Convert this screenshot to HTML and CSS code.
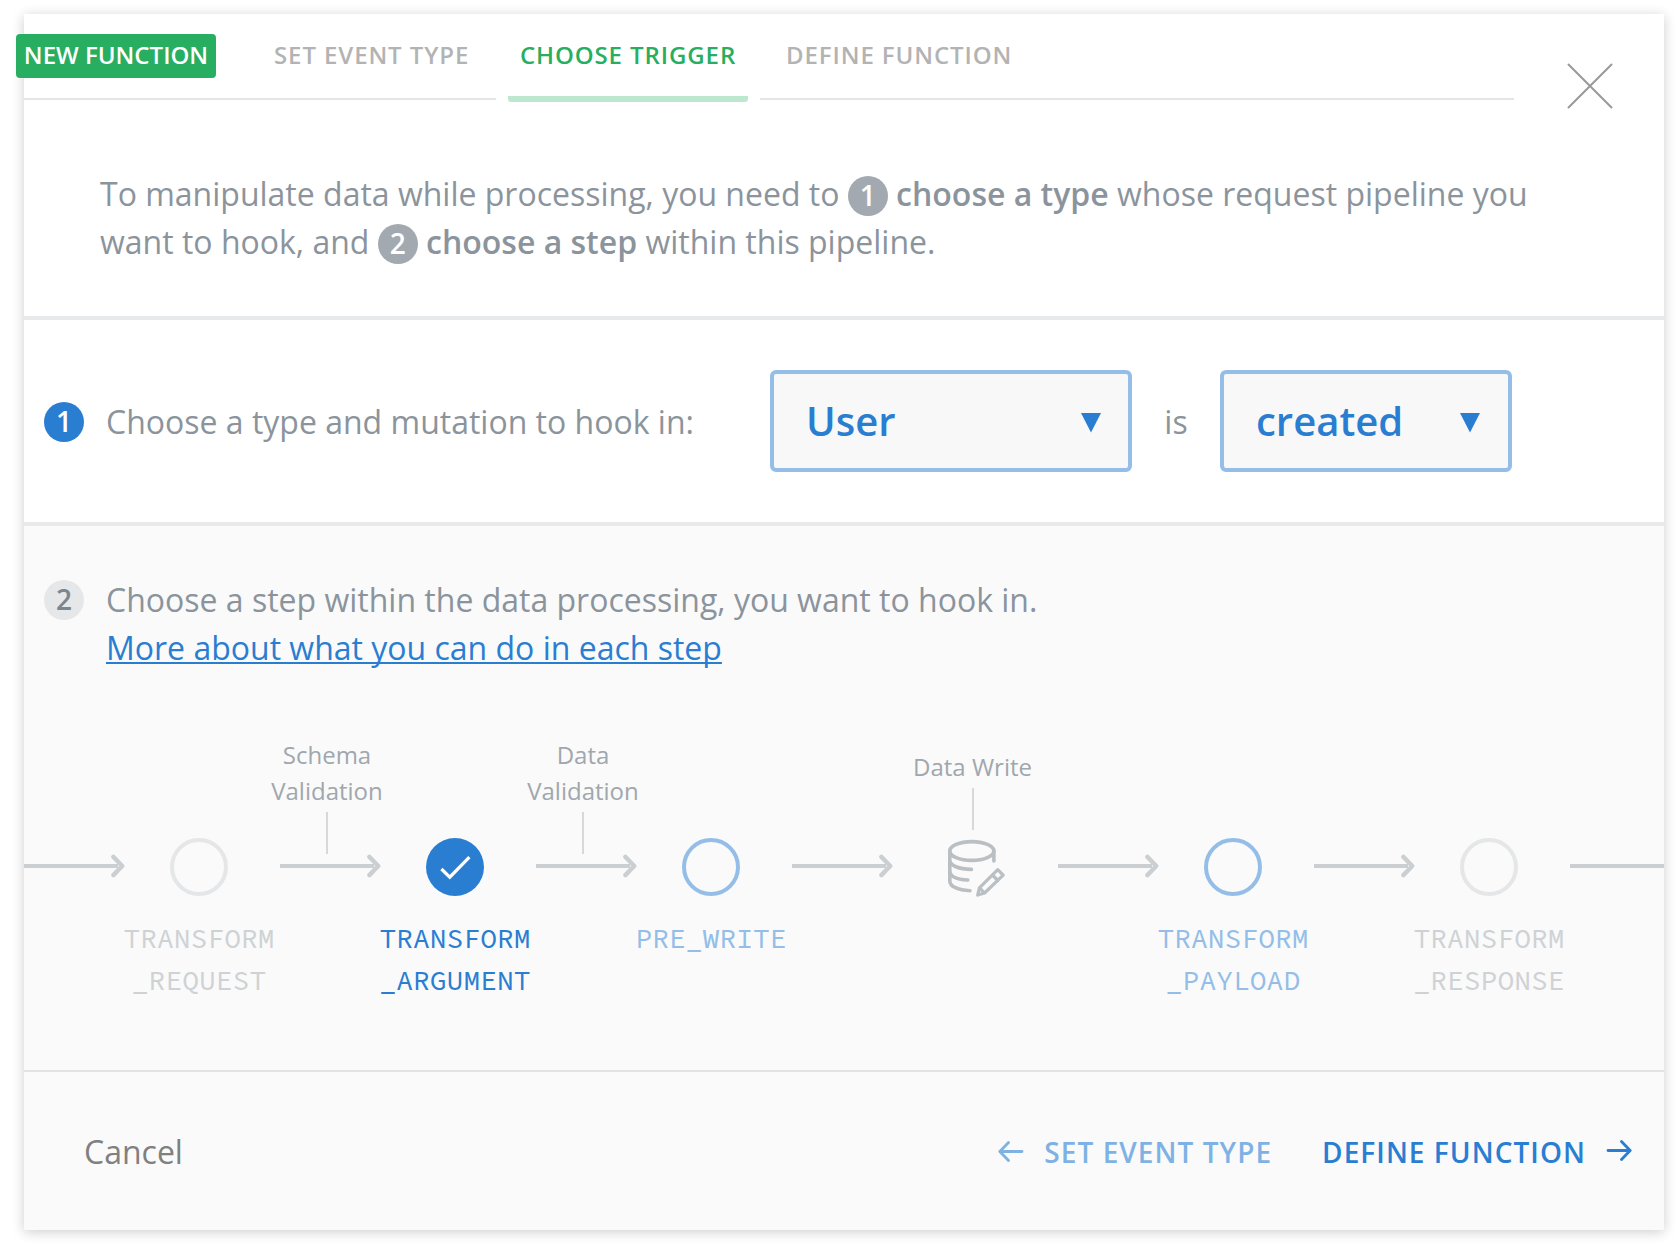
FILE: index.html
```
<!DOCTYPE html>
<html lang="en">
<head>
<meta charset="utf-8">
<title>New Function</title>
<link rel="stylesheet" href="styles.css">
</head>
<body>
<svg class="defs" width="0" height="0" aria-hidden="true">
  <symbol id="flow-arrow" viewBox="0 0 101 24">
    <path d="M0 12H94" fill="none" stroke="#cbcfd1" stroke-width="4"/>
    <path d="M89.4 2.9L98.2 12L89.4 21.1" fill="none" stroke="#cbcfd1" stroke-width="4.4" stroke-linejoin="round" stroke-linecap="round"/>
  </symbol>
  <symbol id="caret" viewBox="0 0 20 20">
    <path d="M0 0H20L10 19.5Z" fill="#2a7ed2"/>
  </symbol>
</svg>

<main class="popup">
  <header class="header">
    <div class="segment segment-first">
      <span class="badge">NEW FUNCTION</span>
      <span class="tab">SET EVENT TYPE</span>
    </div>
    <div class="segment segment-active"><span class="tab">CHOOSE TRIGGER</span></div>
    <div class="segment segment-last"><span class="tab">DEFINE FUNCTION</span></div>
    <svg class="close" width="46" height="46" viewBox="0 0 46 46"><path d="M1.5 1.5L44.5 44.5M44.5 1.5L1.5 44.5" fill="none" stroke="#999" stroke-width="2" stroke-linecap="round"/></svg>
  </header>

  <p class="intro">To manipulate data while processing, you need to <span class="num num-gray">1</span> <b>choose a type</b> whose request pipeline you<br>want to hook, and <span class="num num-gray">2</span> <b>choose a step</b> within this pipeline.</p>

  <section class="trigger">
    <span class="num num-blue">1</span>
    <span class="trigger-text">Choose a type and mutation to hook in:</span>
    <div class="select select-type"><span>User</span><svg class="caret" width="20" height="20"><use href="#caret"/></svg></div>
    <span class="is">is</span>
    <div class="select select-mutation"><span>created</span><svg class="caret" width="20" height="20"><use href="#caret"/></svg></div>
  </section>

  <section class="steps">
    <div class="steps-head">
      <span class="num num-pale">2</span>
      <div class="steps-text">Choose a step within the data processing, you want to hook in.<br><a class="more" href="#">More about what you can do in each step</a></div>
    </div>

    <div class="pipeline">
      <div class="note note-arrow c3">Schema<br>Validation<i class="stem"></i></div>
      <div class="note note-arrow c5">Data<br>Validation<i class="stem"></i></div>
      <div class="note c8">Data Write<i class="stem"></i></div>

      <svg class="arrow" width="101" height="24"><use href="#flow-arrow"/></svg>
      <span class="node node-off"></span>
      <svg class="arrow" width="101" height="24"><use href="#flow-arrow"/></svg>
      <span class="node node-on"><svg width="58" height="58" viewBox="0 0 58 58"><path d="M15.4 31L23.8 39.2L43.4 19.2" fill="none" stroke="#fff" stroke-width="3.2"/></svg></span>
      <svg class="arrow" width="101" height="24"><use href="#flow-arrow"/></svg>
      <span class="node"></span>
      <svg class="arrow" width="101" height="24"><use href="#flow-arrow"/></svg>
      <svg class="db" width="58" height="60" viewBox="0 0 58 60" fill="none" stroke="#b9bfc3" stroke-width="3.6" stroke-linecap="round" stroke-linejoin="round">
        <ellipse cx="23.8" cy="13" rx="22.1" ry="9.4"/>
        <path d="M45.9 13V23M1.8 13V43C1.8 48.5 10 52.2 22 52.7M1.8 22C1.8 27.5 11 31.4 23.5 31.4M1.8 32.5C1.8 38.5 9 41.6 19.8 42"/>
        <path stroke-width="3.2" d="M49.7 31.7L55.2 37.1L36.6 55L29.7 57L31.4 49.8ZM44.4 37L49.9 42.5M31.8 50.2L36.2 54.6"/>
      </svg>
      <svg class="arrow" width="101" height="24"><use href="#flow-arrow"/></svg>
      <span class="node"></span>
      <svg class="arrow" width="101" height="24"><use href="#flow-arrow"/></svg>
      <span class="node node-off"></span>
      <span class="tail"></span>

      <div class="label label-off c2">TRANSFORM<br>_REQUEST</div>
      <div class="label label-on c4">TRANSFORM<br>_ARGUMENT</div>
      <div class="label c6">PRE_WRITE</div>
      <div class="label c10">TRANSFORM<br>_PAYLOAD</div>
      <div class="label label-off c12">TRANSFORM<br>_RESPONSE</div>
    </div>
  </section>

  <footer class="footer">
    <span class="cancel">Cancel</span>
    <span class="action action-back"><svg width="26" height="22" viewBox="0 0 26 22"><path d="M24 11.5H2M10.5 2.5L1.8 11.5L10.5 20.5" fill="none" stroke="currentColor" stroke-width="2.8" stroke-linecap="round" stroke-linejoin="round"/></svg><span class="action-text">SET EVENT TYPE</span></span>
    <span class="action action-next"><span class="action-text">DEFINE FUNCTION</span><svg width="26" height="22" viewBox="0 0 26 22"><path d="M2 10.5H24M15.5 1.5L24.2 10.5L15.5 19.5" fill="none" stroke="currentColor" stroke-width="2.8" stroke-linecap="round" stroke-linejoin="round"/></svg></span>
  </footer>
</main>
</body>
</html>
```
FILE: styles.css
```
* { box-sizing: border-box; }

body {
  margin: 0;
  padding: 14px 16px 20px 24px;
  background: #fff;
  font-family: "Open Sans", sans-serif;
  font-size: 32px;
  line-height: 48px;
  color: #8b949c;
}

b { font-weight: 600; }
svg { display: block; flex: none; }
.defs { display: none; }

.popup {
  width: 1640px;
  height: 1216px;
  background: #fff;
  box-shadow: 0 2px 12px rgba(0, 0, 0, .2);
}

/* Tabs */
.header { display: flex; height: 88px; }
.segment {
  display: flex;
  align-items: flex-start;
  height: 86px;
  padding-top: 20px;
  border-bottom: 2px solid #e5e5e5;
  font-size: 24px;
  line-height: 42px;
  font-weight: 600;
  color: #b3b3b3;
}
.segment-first { width: 472px; }
.segment-active {
  width: 240px;
  height: 88px;
  margin: 0 12px;
  justify-content: center;
  border: 0;
  color: #27ae60;
  background: linear-gradient(#bee7cf, #bee7cf) no-repeat 0 82px;
  border-radius: 0 0 3px 3px;
}
.segment-last { width: 754px; padding-left: 26px; }
.tab { letter-spacing: .9px; white-space: nowrap; }
.badge {
  width: 200px;
  height: 44px;
  margin: 0 58px 0 -8px;
  text-align: center;
  white-space: nowrap;
  color: #fff;
  background: #27ae60;
  border-radius: 4px;
}
.close { margin: 49px 0 0 53px; }

/* Numbered markers */
.num {
  display: inline-block;
  flex: none;
  width: 40px;
  height: 40px;
  border-radius: 50%;
  font-size: 28px;
  line-height: 38px;
  font-weight: 600;
  text-align: center;
}
.num-gray { color: #fff; background: #a2a9b0; }
.num-blue { color: #fff; background: #2a7ed2; margin: 2px 22px 0 20px; }
.num-pale { color: #7b868f; background: #e5e7e9; margin: 4px 22px 0 20px; }

.intro {
  height: 218px;
  margin: 0;
  padding: 68px 0 0 76px;
  border-bottom: 4px solid #e7e9eb;
  white-space: nowrap;
}

/* Type and mutation */
.trigger {
  display: flex;
  align-items: center;
  height: 206px;
  border-bottom: 4px solid #e7e9eb;
}
.trigger-text { width: 664px; padding-top: 2px; }
.select {
  display: flex;
  align-items: center;
  justify-content: space-between;
  height: 102px;
  padding: 0 27px 0 32px;
  border: 4px solid #94bee8;
  border-radius: 6px;
  background: #f8f8f8;
  font-size: 40px;
  font-weight: 600;
  color: #2a7ed2;
}
.select-type { width: 362px; }
.select-mutation { width: 292px; padding-right: 28px; }
.caret { margin-top: 4px; }
.is { width: 88px; padding-top: 2px; text-align: center; }

/* Pipeline steps */
.steps {
  height: 544px;
  padding-top: 50px;
  background: #fafafa;
}
.steps-head { display: flex; align-items: flex-start; }
.more { color: #2a7ed2; text-decoration: underline; text-decoration-thickness: 2px; text-decoration-skip-ink: none; text-underline-offset: 2px; }

.pipeline {
  display: grid;
  grid-template-columns: 100px 156px 100px 156px 100px 156px 100px 166px 100px 156px 100px 156px 94px;
  grid-template-rows: 101px 58px 84px;
  margin-top: 65px;
}
.note {
  grid-row: 1;
  align-self: end;
  justify-self: center;
  margin: 0 5px 8px 0;
  font-size: 24px;
  line-height: 36px;
  text-align: center;
  white-space: nowrap;
  color: #a0a7ad;
}
.note-arrow { margin: 0 -6px -16px -12px; width: 112px; }
.stem { display: block; width: 2px; height: 42px; margin: 3px auto 0; background: #d6d9db; }
.arrow { grid-row: 2; margin-top: 16px; }
.node {
  grid-row: 2;
  width: 58px;
  height: 58px;
  margin-left: 46px;
  border: 4px solid #94bee8;
  border-radius: 50%;
}
.node-off { border-color: #e4e6e8; }
.node-on { border: 0; background: #2a7ed2; }
.db { grid-row: 2; margin-left: 56px; }
.tail { grid-row: 2; height: 4px; margin-top: 26px; background: #cbcfd1; }
.label {
  grid-row: 3;
  justify-self: center;
  margin: 21px 6px 0 0;
  font-family: "Source Code Pro", "Liberation Mono", monospace;
  font-size: 28px;
  line-height: 42px;
  text-align: center;
  color: #94bee8;
}
.label-off { color: #cfd2d5; }
.label-on { color: #2a7ed2; }

.c2 { grid-column: 2; }
.c3 { grid-column: 3; }
.c4 { grid-column: 4; }
.c5 { grid-column: 5; }
.c6 { grid-column: 6; }
.c8 { grid-column: 8; }
.c10 { grid-column: 10; }
.c12 { grid-column: 12; }

/* Footer */
.footer {
  display: flex;
  align-items: center;
  height: 160px;
  padding: 0 32px 0 60px;
  border-top: 2px solid #e0e3e2;
  background: #fafafa;
}
.cancel { margin-right: auto; padding-top: 2px; color: #808080; }
.action {
  display: flex;
  align-items: center;
  font-size: 28px;
  font-weight: 600;
  letter-spacing: 1.05px;
  white-space: nowrap;
}
.action-text { padding-top: 1px; }
.action-back { gap: 20px; color: #7fb2e4; margin-right: 50px; }
.action-next { gap: 20px; color: #2a7ed2; }
```
